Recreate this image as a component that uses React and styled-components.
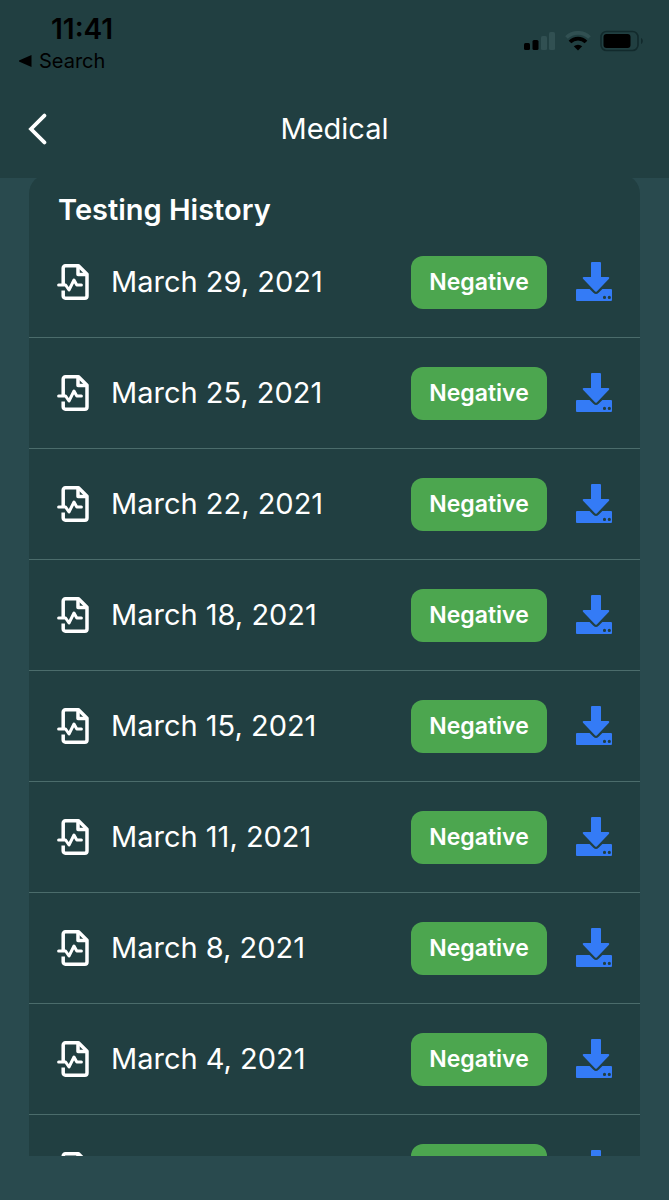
import styled, { createGlobalStyle } from "styled-components";

const GlobalStyle = createGlobalStyle`
  * {
    box-sizing: border-box;
  }
  body {
    margin: 0;
    background: #294a4e;
    font-family: Inter, "Liberation Sans", sans-serif;
  }
  button {
    font-family: inherit;
  }
`;

const Screen = styled.div`
  display: flex;
  flex-direction: column;
  height: 100vh;
  padding-bottom: 44px;
  overflow: hidden;
  background: #294a4e;
`;

const StatusBar = styled.div`
  display: flex;
  flex-shrink: 0;
  justify-content: space-between;
  height: 80px;
  padding: 12px 25px 0 19px;
  background: #213f41;
  color: #000;
`;

const Clock = styled.div`
  padding-left: 32px;
  font-size: 28px;
  font-weight: 600;
  line-height: 34px;
`;

const BackToApp = styled.a`
  display: flex;
  align-items: center;
  gap: 7px;
  color: inherit;
  font-size: 20px;
  line-height: 30px;
  text-decoration: none;
`;

const StatusIcons = styled.div`
  display: flex;
  align-items: center;
  gap: 9px;
  height: 58px;
`;

const Header = styled.header`
  display: grid;
  grid-template-columns: 48px 1fr 48px;
  align-items: center;
  flex-shrink: 0;
  height: 98px;
  padding: 0 14px;
  background: #213f41;
  color: #fff;
`;

const Title = styled.h1`
  margin: 0;
  font-size: 29px;
  font-weight: 400;
  line-height: 36px;
  text-align: center;
`;

const IconButton = styled.button`
  display: flex;
  align-items: center;
  justify-content: center;
  padding: 0;
  border: 0;
  background: none;
  color: ${(props) => props.$color};
  cursor: pointer;
`;

const Content = styled.main`
  flex: 1;
  min-height: 0;
  padding: 0 29px;
  overflow: hidden;
`;

const Card = styled.section`
  margin-top: -4px;
  padding-top: 18px;
  border-radius: 20px;
  background: #213f41;
  color: #fff;
`;

const CardTitle = styled.h2`
  margin: 0;
  padding: 0 29px;
  font-size: 29px;
  font-weight: 600;
  line-height: 36px;
`;

const List = styled.ul`
  margin: -1px 0 0;
  padding: 0;
  list-style: none;
`;

const Row = styled.li`
  display: flex;
  align-items: center;
  height: 111px;
  padding: 0 28px;
  border-bottom: 1px solid #4b6c6b;
`;

const TestDate = styled.span`
  flex: 1;
  margin-left: 22px;
  font-size: 29px;
  font-weight: 400;
  line-height: 36px;
`;

const Badge = styled.span`
  width: 136px;
  margin-right: 29px;
  border-radius: 12px;
  background: #4ca64f;
  font-size: 23px;
  font-weight: 600;
  line-height: 53px;
  text-align: center;
`;

const tests = [
  "March 29, 2021",
  "March 25, 2021",
  "March 22, 2021",
  "March 18, 2021",
  "March 15, 2021",
  "March 11, 2021",
  "March 8, 2021",
  "March 4, 2021",
  "March 1, 2021",
];

const SignalIcon = () => (
  <svg width="32" height="20" viewBox="0 0 32 20">
    <rect x="0" y="12" width="6" height="7" rx="1.5" />
    <rect x="8.5" y="9" width="6" height="10" rx="1.5" />
    <rect x="17" y="5" width="6" height="14" rx="1.5" fill="#315052" />
    <rect x="25" y="1" width="6" height="18" rx="1.5" fill="#315052" />
  </svg>
);

const WifiIcon = () => (
  <svg width="26" height="20" viewBox="0 0 26 20" fill="none">
    <path d="M1.5 6.5a16.5 16.5 0 0 1 23 0" stroke="#315052" strokeWidth="3.8" />
    <path d="M5 11a11.4 11.4 0 0 1 16 0" stroke="#000" strokeWidth="3.8" />
    <path d="M8.8 15.3a6.2 6.2 0 0 1 8.4 0L13 19.6z" fill="#000" />
  </svg>
);

const BatteryIcon = () => (
  <svg width="44" height="22" viewBox="0 0 44 22">
    <rect x="1" y="1.5" width="37" height="19" rx="5.5" fill="none" stroke="#122a2c" strokeWidth="1.6" />
    <rect x="3.5" y="4" width="27" height="14" rx="3" />
    <path d="M41 8c2.4.8 2.4 5.2 0 6z" fill="#122a2c" />
  </svg>
);

const FileIcon = () => (
  <svg
    width="32"
    height="36"
    viewBox="0 0 32 36"
    fill="none"
    stroke="currentColor"
    strokeWidth="3.5"
    strokeLinecap="round"
    strokeLinejoin="round"
  >
    <path d="M6.2 21V4a2.2 2.2 0 0 1 2.2-2.2H21.5L30 10.2V32a2.2 2.2 0 0 1-2.2 2.2H8.4A2.2 2.2 0 0 1 6.2 32V26.5" strokeLinecap="butt" />
    <path d="M21 2.4V10.6H29.4" />
    <path d="M1.6 21H8.6L12 26L17 16L19.8 21H24.4" strokeWidth="3" />
  </svg>
);

const DownloadIcon = () => (
  <svg width="36" height="40" viewBox="0 0 36 40" fill="currentColor">
    <path d="M16 0h8a1 1 0 0 1 1 1v14h7.3a1 1 0 0 1 .7 1.7L20.8 29.5a1.2 1.2 0 0 1-1.6 0L7 16.7a1 1 0 0 1 .7-1.7H15V1a1 1 0 0 1 1-1z" />
    <path
      fillRule="evenodd"
      d="M1 27h12.6l3.8 3.8a3.8 3.8 0 0 0 5.2 0l3.8-3.8H35a1 1 0 0 1 1 1v10a1 1 0 0 1-1 1H1a1 1 0 0 1-1-1V28a1 1 0 0 1 1-1zM28.5 33.8a1.6 1.6 0 1 0 0 3.2 1.6 1.6 0 0 0 0-3.2zM33.3 33.8a1.6 1.6 0 1 0 0 3.2 1.6 1.6 0 0 0 0-3.2z"
    />
  </svg>
);

const App = () => {
  return (
    <Screen>
      <GlobalStyle />
      <StatusBar>
        <div>
          <Clock>11:41</Clock>
          <BackToApp href="#search">
            <svg width="13" height="12" viewBox="0 0 13 12">
              <path d="M12.5 0v12L.5 6.8a.9.9 0 0 1 0-1.6z" />
            </svg>
            Search
          </BackToApp>
        </div>
        <StatusIcons>
          <SignalIcon />
          <WifiIcon />
          <BatteryIcon />
        </StatusIcons>
      </StatusBar>
      <Header>
        <IconButton $color="#fff" aria-label="Back">
          <svg width="20" height="32" viewBox="0 0 20 32" fill="none" stroke="currentColor" strokeWidth="3.8" strokeLinecap="round">
            <path d="M16.4 2.6L3 16l13.4 13.4" />
          </svg>
        </IconButton>
        <Title>Medical</Title>
      </Header>
      <Content>
        <Card>
          <CardTitle>Testing History</CardTitle>
          <List>
            {tests.map((date) => (
              <Row key={date}>
                <FileIcon />
                <TestDate>{date}</TestDate>
                <Badge>Negative</Badge>
                <IconButton $color="#347bf6" aria-label={`Download ${date} result`}>
                  <DownloadIcon />
                </IconButton>
              </Row>
            ))}
          </List>
        </Card>
      </Content>
    </Screen>
  );
};

export default App;
